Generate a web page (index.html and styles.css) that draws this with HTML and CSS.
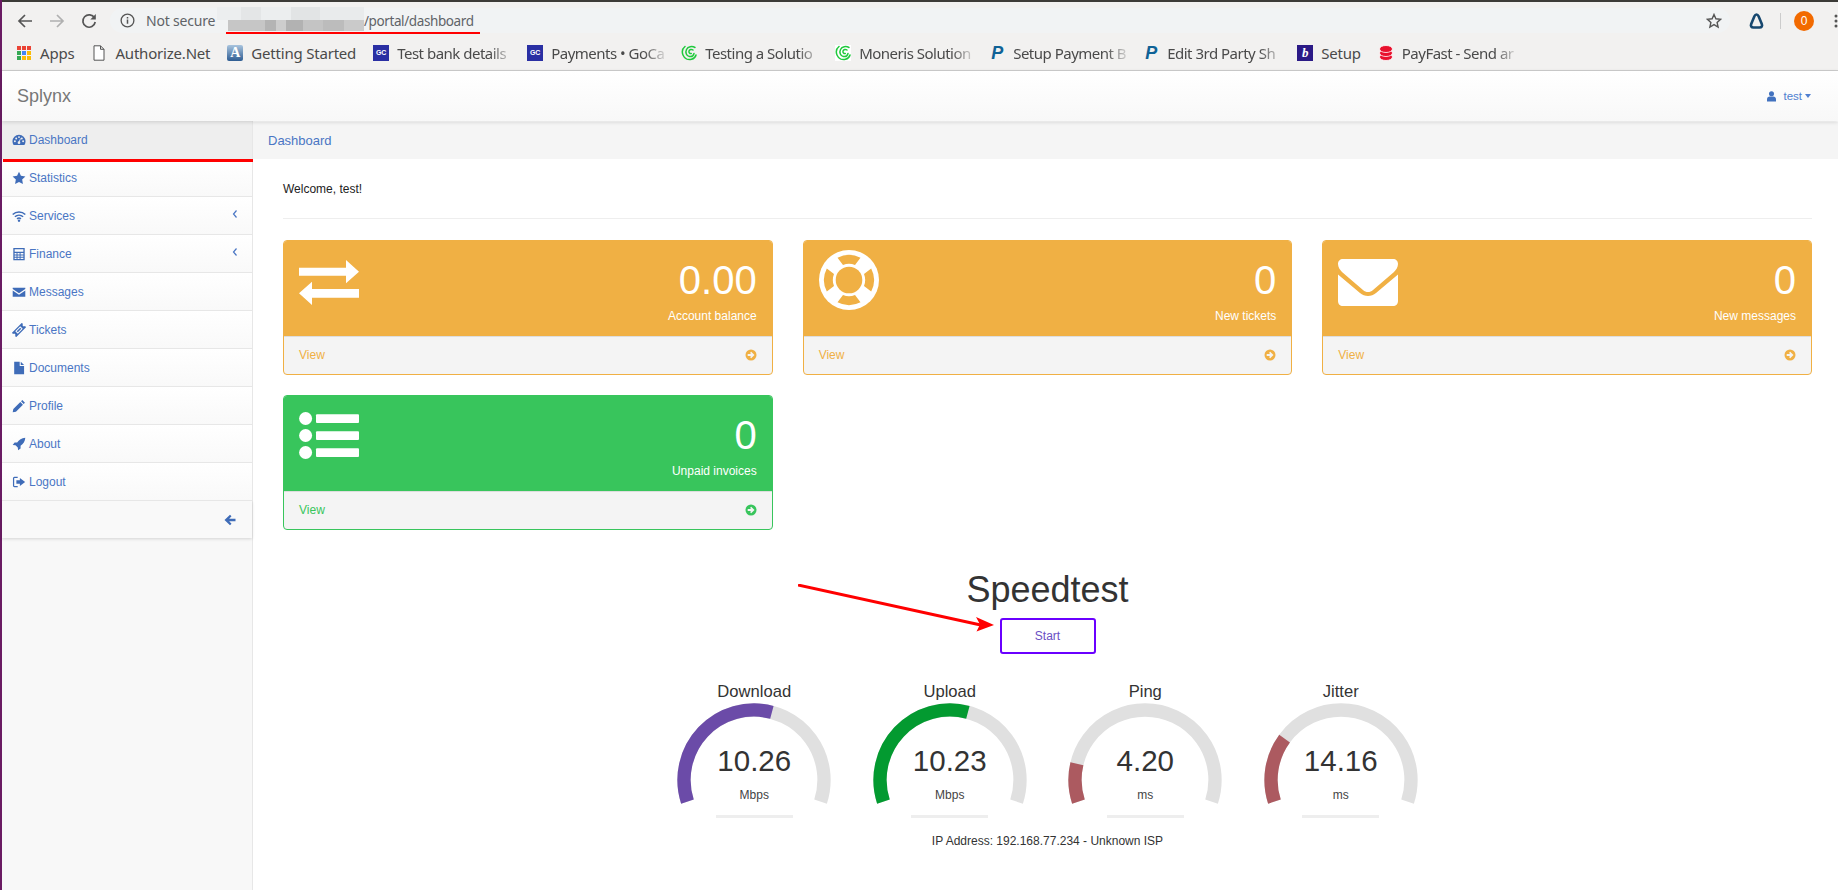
FILE: index.html
```html
<!DOCTYPE html>
<html lang="en">
<head>
  <meta charset="UTF-8" />
  <title>Splynx - Dashboard</title>
  <link rel="stylesheet" href="styles.css">
</head>
<body>
  <svg class="defs" width="0" height="0">
    <symbol id="i-swirl" viewBox="0 0 16 16">
      <g fill="none" stroke="#1fc93c" stroke-width="1.5" stroke-linecap="round">
        <path d="M4 1.5C1.5 3.5.8 7 2 10c1.400 3.500 5 5.200 8.500 4.300 2.300-.6 4-2.300 4.500-4.300"/>
        <path d="M14 2.500C11 .8 7 1.500 5.500 4.500 4 7.500 5.500 11 8.500 11.500c2.300.4 4-1 4.500-3"/>
        <path d="M12 5C10.500 3.800 8.500 4.500 8 6c-.4 1.500.8 2.800 2.300 2.500"/>
      </g>
    </symbol>
    <symbol id="i-go" viewBox="0 0 12 12">
      <circle cx="6" cy="6" r="5.500" fill="currentColor"/>
      <path d="M6.200 2.700L9.500 6 6.200 9.300 5 8.100 6.200 6.900H2.700V5.100h3.500L5 3.900z" fill="#f4f4f4"/>
    </symbol>
    <symbol id="i-chev" viewBox="0 0 6 10">
      <path d="M4.500 1.500L1.500 5l3 3.500" fill="none" stroke="currentColor" stroke-width="1.200"/>
    </symbol>
  </svg>

  <div class="window">
    <header class="chrome">
      <div class="toolbar">
        <svg class="tb-icon" viewBox="0 0 16 16"><path d="M15 8H2M8 2L2 8l6 6" fill="none" stroke="#555" stroke-width="1.700"/></svg>
        <svg class="tb-icon" viewBox="0 0 16 16"><path d="M1 8h13M8 2l6 6-6 6" fill="none" stroke="#b0b0b0" stroke-width="1.700"/></svg>
        <svg class="tb-icon" viewBox="0 0 16 16"><path d="M13.500 5A6.200 6.200 0 1 0 14.200 9" fill="none" stroke="#555" stroke-width="1.700"/><path d="M14.800 1v5.500H9.300z" fill="#555"/></svg>
        <div class="omnibox">
          <svg class="info-icon" viewBox="0 0 16 16"><circle cx="8" cy="8" r="6.800" fill="none" stroke="#555" stroke-width="1.400"/><path d="M7.200 7h1.600v4.500H7.200zM7.200 4.200h1.600v1.600H7.200z" fill="#555"/></svg>
          <span class="not-secure">Not secure</span>
          <span class="url">/portal/dashboard</span>
          <svg class="star-icon" viewBox="0 0 16 16"><path d="M8 1.500l1.900 4.300 4.600.5-3.400 3.100 1 4.600L8 11.600l-4.100 2.400 1-4.600L1.500 6.300l4.600-.5z" fill="none" stroke="#555" stroke-width="1.400"/></svg>
        </div>
        <svg class="ext-icon" viewBox="0 0 16 16"><path d="M8 1.500c1 0 1.600.7 2.100 1.800l3.200 7.700c.8 2-.1 3.500-2.300 3.500H5c-2.200 0-3.100-1.500-2.300-3.500l3.200-7.700C6.400 2.200 7 1.500 8 1.500z" fill="none" stroke="#17486f" stroke-width="2.600"/></svg>
        <span class="tb-sep"></span>
        <span class="avatar">0</span>
        <svg class="dots-icon" viewBox="0 0 4 16"><circle cx="2" cy="3" r="1.500"/><circle cx="2" cy="8" r="1.500"/><circle cx="2" cy="13" r="1.500"/></svg>
      </div>
      <nav class="bookmarks">
        <a class="bm">
          <svg class="fav" viewBox="0 0 16 16">
            <rect x="1" y="1" width="4" height="4" fill="#ea4335"/><rect x="6" y="1" width="4" height="4" fill="#ea4335"/><rect x="11" y="1" width="4" height="4" fill="#ea4335"/>
            <rect x="1" y="6" width="4" height="4" fill="#34a853"/><rect x="6" y="6" width="4" height="4" fill="#4285f4"/><rect x="11" y="6" width="4" height="4" fill="#fbbc05"/>
            <rect x="1" y="11" width="4" height="4" fill="#34a853"/><rect x="6" y="11" width="4" height="4" fill="#fbbc05"/><rect x="11" y="11" width="4" height="4" fill="#fbbc05"/>
          </svg>
          <span class="bm-text">Apps</span>
        </a>
        <a class="bm">
          <svg class="fav" viewBox="0 0 16 16"><path d="M3 .8h6.500L13 4.300V15.200H3zM9.500.8v3.500H13" fill="#fff" stroke="#555" stroke-width="1"/></svg>
          <span class="bm-text">Authorize.Net</span>
        </a>
        <a class="bm">
          <span class="fav fav-a">A</span>
          <span class="bm-text">Getting Started</span>
        </a>
        <a class="bm">
          <span class="fav fav-gc">GC</span>
          <span class="bm-text bm-fade">Test bank details</span>
        </a>
        <a class="bm">
          <span class="fav fav-gc">GC</span>
          <span class="bm-text bm-fade">Payments • GoCa</span>
        </a>
        <a class="bm">
          <svg class="fav"><use href="#i-swirl"/></svg>
          <span class="bm-text bm-fade">Testing a Solutio</span>
        </a>
        <a class="bm">
          <svg class="fav fav-white"><use href="#i-swirl"/></svg>
          <span class="bm-text bm-fade">Moneris Solution</span>
        </a>
        <a class="bm">
          <span class="fav fav-p">P</span>
          <span class="bm-text bm-fade">Setup Payment B</span>
        </a>
        <a class="bm">
          <span class="fav fav-p">P</span>
          <span class="bm-text bm-fade">Edit 3rd Party Sh</span>
        </a>
        <a class="bm">
          <span class="fav fav-b">b</span>
          <span class="bm-text">Setup</span>
        </a>
        <a class="bm">
          <svg class="fav" viewBox="0 0 16 16"><g fill="#e8112d" stroke="#fff" stroke-width=".8"><ellipse cx="8" cy="12" rx="6.500" ry="3.500"/><ellipse cx="8" cy="8" rx="6.500" ry="3.500"/><ellipse cx="8" cy="4" rx="6.500" ry="3.500"/></g></svg>
          <span class="bm-text bm-fade">PayFast - Send ar</span>
        </a>
      </nav>
    </header>

    <div class="navbar">
      <span class="brand">Splynx</span>
      <a class="user-menu">
        <svg class="user-icon" viewBox="0 0 10 12"><circle cx="5" cy="3" r="2.800"/><path d="M0 11.500V9c0-2 1.500-3 3-3h4c1.500 0 3 1 3 3v2.500z"/></svg>
        test
        <span class="caret"></span>
      </a>
    </div>

    <div class="layout">
      <aside class="sidebar">
        <ul class="side-menu">
          <li class="side-item active">
            <svg class="side-icon" viewBox="0 0 16 16"><path d="M8 2a7.500 7.500 0 0 0-7.500 7.500c0 1.600.5 3 1.300 4.200h12.400c.8-1.200 1.300-2.600 1.300-4.200A7.500 7.500 0 0 0 8 2z"/><g fill="#eee"><circle cx="3.300" cy="9.500" r="1.100"/><circle cx="4.800" cy="6.200" r="1.100"/><circle cx="8" cy="4.700" r="1.100"/><circle cx="11.200" cy="6.200" r="1.100"/><circle cx="12.700" cy="9.500" r="1.100"/><circle cx="8" cy="11" r="1.500"/><path d="M7.400 10.500L9.500 6l.6.300-1.600 4.700z"/></g></svg>
            Dashboard
          </li>
          <li class="side-item">
            <svg class="side-icon" viewBox="0 0 16 16"><path d="M8 .8l2.200 4.700 5.100.7-3.700 3.600.9 5.100L8 12.600l-4.500 2.300.9-5.100L.7 6.200l5.100-.7z"/></svg>
            Statistics
          </li>
          <li class="side-item">
            <svg class="side-icon" viewBox="0 0 16 16"><g fill="none" stroke="currentColor" stroke-width="1.800"><path d="M.8 6.300a10.500 10.500 0 0 1 14.400 0"/><path d="M3.300 8.900a7 7 0 0 1 9.400 0"/><path d="M5.800 11.300a3.300 3.300 0 0 1 4.400 0"/></g><circle cx="8" cy="13.300" r="1.400"/></svg>
            Services
            <svg class="side-chev"><use href="#i-chev"/></svg>
          </li>
          <li class="side-item">
            <svg class="side-icon" viewBox="0 0 16 16"><path fill-rule="evenodd" d="M1.500 1h13v14h-13zM3 2.500v2.800h10V2.500zM3 6.800v1.700h2.200V6.800zm3.300 0v1.700h2.400V6.800zm3.500 0v1.700H13V6.800zM3 9.600v1.600h2.200V9.600zm3.300 0v1.600h2.400V9.600zm3.500 0v1.600H13V9.600zM3 12.200v1.500h2.200v-1.500zm3.300 0v1.500h2.400v-1.500zm3.500 0v1.500H13v-1.500z"/></svg>
            Finance
            <svg class="side-chev"><use href="#i-chev"/></svg>
          </li>
          <li class="side-item">
            <svg class="side-icon" viewBox="0 0 16 16"><path d="M.8 3h14.400v1.500L8 9.300.8 4.500zM.8 6.300L8 11l7.200-4.700V13.500H.8z"/></svg>
            Messages
          </li>
          <li class="side-item">
            <svg class="side-icon" viewBox="0 0 16 16"><g transform="rotate(-45 8 8)"><path fill-rule="evenodd" d="M0 4.500h16v2a1.500 1.500 0 0 0 0 3v2H0v-2a1.500 1.500 0 0 0 0-3zM4 6v4h8V6z"/><rect x="5.200" y="7.100" width="5.600" height="1.800"/></g></svg>
            Tickets
          </li>
          <li class="side-item">
            <svg class="side-icon" viewBox="0 0 16 16"><path d="M2.500.8h6.300v5h5v9.400H2.500zM10 .8l3.800 3.800H10z"/></svg>
            Documents
          </li>
          <li class="side-item">
            <svg class="side-icon" viewBox="0 0 16 16"><path d="M11.800 1.200l3 3-1.500 1.500-3-3zM9.500 3.500l3 3-8 8-3.700.7.700-3.700z"/></svg>
            Profile
          </li>
          <li class="side-item">
            <svg class="side-icon" viewBox="0 0 16 16"><path d="M15.200.8c-4.300.2-7.200 2.400-9.300 5.400H3L.8 9l3.200.4 2.600 2.600.4 3.200 2.800-2.200v-2.900c3-2.100 5.200-5 5.400-9.300z"/></svg>
            About
          </li>
          <li class="side-item">
            <svg class="side-icon" viewBox="0 0 16 16"><path d="M6.500 2.800H2.800a1 1 0 0 0-1 1v8.400a1 1 0 0 0 1 1h3.700" fill="none" stroke="currentColor" stroke-width="1.400"/><path d="M9 3.500L15 8l-6 4.500V10H5V6h4z"/></svg>
            Logout
          </li>
        </ul>
        <div class="side-collapse">
          <svg class="collapse-icon" viewBox="0 0 12 12"><path d="M6 .8l1.500 1.500-2.300 2.400h6.300v2.600H5.200l2.300 2.400L6 11.200.5 6z"/></svg>
        </div>
      </aside>

      <main class="main">
        <div class="breadcrumb">Dashboard</div>
        <div class="content">
          <p class="welcome">Welcome, test!</p>
          <hr class="rule">

          <div class="cards">
            <div class="card card-orange">
              <div class="card-head">
                <svg class="card-icon" viewBox="0 0 60 47"><path d="M0 7.700h47V0l13 11.700-13 11.600v-7.600H0zM60 29H13v-7.300L0 33.300 13 45v-7.300h47z"/></svg>
                <div class="card-nums">
                  <div class="card-value">0.00</div>
                  <div class="card-label">Account balance</div>
                </div>
              </div>
              <a class="card-foot">View <svg class="go-icon"><use href="#i-go"/></svg></a>
            </div>
            <div class="card card-orange">
              <div class="card-head">
                <svg class="card-icon icon-ring" viewBox="-30 -20 60 47">
                  <circle r="30"/>
                  <circle r="13.300" fill="#f0b044"/>
                  <g fill="#f0b044">
                    <path id="ring-seg" d="M-11.500-22.200A25 25 0 0 1 11.500-22.200L6-15A16.200 16.200 0 0 0-6-15z"/>
                    <use href="#ring-seg" transform="rotate(90)"/>
                    <use href="#ring-seg" transform="rotate(180)"/>
                    <use href="#ring-seg" transform="rotate(270)"/>
                  </g>
                </svg>
                <div class="card-nums">
                  <div class="card-value">0</div>
                  <div class="card-label">New tickets</div>
                </div>
              </div>
              <a class="card-foot">View <svg class="go-icon"><use href="#i-go"/></svg></a>
            </div>
            <div class="card card-orange">
              <div class="card-head">
                <svg class="card-icon icon-mail" viewBox="0 0 60 47"><path d="M5 0h50c3 0 5 2 5 5 0 3-2 6-4 8L35 31c-3 2.700-7 2.700-10 0L4 13C2 11 0 8 0 5c0-3 2-5 5-5z"/><path d="M0 15.500L22 34c4.500 4 11.500 4 16 0l22-18.500V42c0 3-2 5-5 5H5c-3 0-5-2-5-5z"/></svg>
                <div class="card-nums">
                  <div class="card-value">0</div>
                  <div class="card-label">New messages</div>
                </div>
              </div>
              <a class="card-foot">View <svg class="go-icon"><use href="#i-go"/></svg></a>
            </div>
            <div class="card card-green">
              <div class="card-head">
                <svg class="card-icon icon-list" viewBox="0 0 60 47"><circle cx="6.600" cy="6.500" r="6.500"/><circle cx="6.600" cy="23.500" r="6.500"/><circle cx="6.600" cy="40.500" r="6.500"/><rect x="17" y="2.200" width="43" height="8.700" rx="1"/><rect x="17" y="19.200" width="43" height="8.700" rx="1"/><rect x="17" y="36.200" width="43" height="8.700" rx="1"/></svg>
                <div class="card-nums">
                  <div class="card-value">0</div>
                  <div class="card-label">Unpaid invoices</div>
                </div>
              </div>
              <a class="card-foot">View <svg class="go-icon"><use href="#i-go"/></svg></a>
            </div>
          </div>

          <section class="speedtest">
            <h1 class="st-title">Speedtest</h1>
            <button class="st-start">Start</button>
            <div class="gauges">
              <div class="gauge">
                <div class="gauge-name">Download</div>
                <svg class="gauge-arc" viewBox="0 0 156 110">
                  <path class="arc-track" d="M11.430 99.630A70 70 0 1 1 144.570 99.630"/>
                  <path class="arc-dl" d="M11.430 99.630A70 70 0 0 1 95.880 10.320"/>
                </svg>
                <div class="gauge-value">10.26</div>
                <div class="gauge-unit">Mbps</div>
                <div class="gauge-progress"></div>
              </div>
              <div class="gauge">
                <div class="gauge-name">Upload</div>
                <svg class="gauge-arc" viewBox="0 0 156 110">
                  <path class="arc-track" d="M11.430 99.630A70 70 0 1 1 144.570 99.630"/>
                  <path class="arc-ul" d="M11.430 99.630A70 70 0 0 1 95.880 10.320"/>
                </svg>
                <div class="gauge-value">10.23</div>
                <div class="gauge-unit">Mbps</div>
                <div class="gauge-progress"></div>
              </div>
              <div class="gauge">
                <div class="gauge-name">Ping</div>
                <svg class="gauge-arc" viewBox="0 0 156 110">
                  <path class="arc-track" d="M11.430 99.630A70 70 0 1 1 144.570 99.630"/>
                  <path class="arc-ping" d="M11.430 99.630A70 70 0 0 1 9.900 61.800"/>
                </svg>
                <div class="gauge-value">4.20</div>
                <div class="gauge-unit">ms</div>
                <div class="gauge-progress"></div>
              </div>
              <div class="gauge">
                <div class="gauge-name">Jitter</div>
                <svg class="gauge-arc" viewBox="0 0 156 110">
                  <path class="arc-track" d="M11.430 99.630A70 70 0 1 1 144.570 99.630"/>
                  <path class="arc-ping" d="M11.430 99.630A70 70 0 0 1 21.600 36.600"/>
                </svg>
                <div class="gauge-value">14.16</div>
                <div class="gauge-unit">ms</div>
                <div class="gauge-progress"></div>
              </div>
            </div>
            <div class="st-ip">IP Address: 192.168.77.234 - Unknown ISP</div>
          </section>
        </div>
      </main>
    </div>
  </div>

  <!-- annotations drawn on top of the screenshot -->
  <div class="blur-top"></div>
  <div class="blur-bottom"></div>
  <div class="mark-url"></div>
  <div class="mark-dash"></div>
  <svg class="mark-arrow" viewBox="0 0 200 50">
    <path d="M0 1L185 41.500" stroke="#f00" stroke-width="3"/>
    <path d="M196 41L178 33l4 7.500-3.500 7z" fill="#f00"/>
  </svg>
</body>
</html>
```

FILE: styles.css
```css
* {
  box-sizing: border-box;
}

html, body {
  margin: 0;
  height: 890px;
  overflow: hidden;
}

body {
  position: relative;
  font-family: "Liberation Sans", Arial, sans-serif;
  font-size: 12px;
  color: #333;
  background: #fff;
}

.defs {
  display: block;
  height: 0;
}

.window {
  height: 890px;
  border-left: 2px solid #6a1b63;
  display: flex;
  flex-direction: column;
}

/* browser chrome */
.chrome {
  height: 71px;
  background: #f2f1f0;
  border-top: 2px solid #3c3b37;
  border-bottom: 1px solid #cfcfcf;
}

.toolbar {
  height: 33px;
  display: flex;
  align-items: center;
  padding: 4px 0 0 15px;
}

.tb-icon {
  width: 16px;
  height: 16px;
  margin-right: 16px;
  flex: none;
}

.omnibox {
  width: 1620px;
  margin-left: -3px;
  height: 25px;
  background: #f1f3f4;
  border-radius: 13px;
  display: flex;
  align-items: center;
  padding-left: 10px;
  font-family: "Noto Sans", sans-serif;
  font-size: 14px;
  color: #5f6368;
}

.info-icon {
  width: 15px;
  height: 15px;
  margin-right: 11px;
}

.not-secure {
  width: 218px;
  letter-spacing: -0.2px;
}

.url {
  flex: 1;
  font-size: 13.500px;
  letter-spacing: -0.4px;
}

.star-icon {
  width: 16px;
  height: 16px;
  margin-right: 8px;
}

.ext-icon {
  width: 17px;
  height: 16px;
  margin-left: 18px;
  flex: none;
}

.tb-sep {
  width: 1px;
  height: 16px;
  background: #ccc;
  margin-left: 15px;
}

.avatar {
  width: 20px;
  height: 20px;
  border-radius: 50%;
  background: #f26a00;
  color: #fff;
  font-size: 12px;
  line-height: 20px;
  text-align: center;
  margin-left: 13px;
  flex: none;
}

.dots-icon {
  width: 4px;
  height: 16px;
  fill: #555;
  margin-left: 20px;
  flex: none;
}

.bookmarks {
  height: 35px;
  display: flex;
  align-items: center;
  padding-left: 14px;
  font-family: "Noto Sans", sans-serif;
  font-size: 15px;
  color: #4a4a4a;
}

.bm {
  display: flex;
  align-items: center;
  margin-right: 17px;
}

.fav {
  width: 16px;
  height: 16px;
  margin-right: 8px;
  flex: none;
  display: block;
}

.fav-white {
  background: #fff;
}

.fav-a {
  background: linear-gradient(#a9c4de, #2e5c92);
  color: #fff;
  font-family: "Liberation Serif", serif;
  font-size: 14px;
  font-weight: bold;
  line-height: 16px;
  text-align: center;
  border-radius: 2px;
}

.fav-gc {
  background: #2a2fa3;
  color: #fff;
  font-family: "Liberation Sans", sans-serif;
  font-size: 7px;
  font-weight: bold;
  line-height: 16px;
  text-align: center;
}

.fav-p {
  color: #0f6296;
  font-family: "Liberation Sans", sans-serif;
  font-size: 18px;
  font-weight: bold;
  font-style: italic;
  line-height: 16px;
  text-align: center;
}

.fav-b {
  background: #2b1a86;
  color: #fff;
  font-family: "Liberation Serif", serif;
  font-size: 13px;
  font-weight: bold;
  font-style: italic;
  line-height: 16px;
  text-align: center;
}

.bm-text {
  white-space: nowrap;
  letter-spacing: -0.2px;
}

.bm-fade {
  width: 113px;
  letter-spacing: -0.5px;
  -webkit-mask-image: linear-gradient(to right, #000 82%, rgba(0, 0, 0, 0.2));
  mask-image: linear-gradient(to right, #000 82%, rgba(0, 0, 0, 0.2));
}

/* app navbar */
.navbar {
  position: relative;
  z-index: 2;
  height: 50px;
  flex: none;
  display: flex;
  align-items: center;
  justify-content: space-between;
  padding: 0 27px 0 15px;
  background: linear-gradient(#fff, #f8f8f8);
  box-shadow: 0 1px 4px rgba(0, 0, 0, 0.15);
}

.brand {
  font-size: 18px;
  color: #777;
}

.user-menu {
  display: flex;
  align-items: center;
  font-size: 11.500px;
  color: #4f7fd0;
}

.user-icon {
  width: 9px;
  height: 11px;
  fill: #4272bf;
  margin-right: 7px;
}

.caret {
  width: 0;
  height: 0;
  border-left: 3.500px solid transparent;
  border-right: 3.500px solid transparent;
  border-top: 4px solid #4f7fd0;
  margin-left: 3px;
}

.layout {
  flex: 1;
  display: flex;
  padding-top: 1px;
  min-height: 0;
}

/* sidebar */
.sidebar {
  width: 251px;
  flex: none;
  margin-top: -1px;
  background: #f8f8f8;
  border-right: 1px solid #e7e7e7;
}

.side-menu {
  list-style: none;
  margin: 0;
  padding: 0;
}

.side-item {
  height: 38px;
  display: flex;
  align-items: center;
  padding-left: 10px;
  border-bottom: 1px solid #e7e7e7;
  background: linear-gradient(#fff, #f9f9f9);
  color: #4a76c4;
  font-size: 12px;
  position: relative;
}

.side-item.active {
  background: #eee;
  border-bottom: 0;
}

.side-icon {
  width: 14px;
  height: 14px;
  margin-right: 3px;
  fill: #3f6cb8;
  color: #3f6cb8;
  flex: none;
}

.side-chev {
  width: 6px;
  height: 10px;
  color: #4a76c4;
  margin-left: auto;
  margin-right: 14px;
  margin-top: -3px;
}

.side-collapse {
  height: 37px;
  display: flex;
  align-items: center;
  justify-content: flex-end;
  padding-right: 16px;
  background: #f9f9f9;
  box-shadow: 0 1px 3px rgba(0, 0, 0, 0.15);
}

.collapse-icon {
  width: 12px;
  height: 12px;
  fill: #3f6cb8;
}

/* main */
.main {
  flex: 1;
  min-width: 0;
}

.breadcrumb {
  height: 37px;
  line-height: 37px;
  padding-left: 15px;
  background: #f5f5f5;
  color: #4a76c4;
  font-size: 13px;
}

.content {
  padding: 22px 26px 0 30px;
}

.welcome {
  margin: 0;
  line-height: 17px;
  font-size: 12px;
  color: #222;
}

.rule {
  border: 0;
  border-top: 1px solid #eee;
  margin: 20px 0 21px;
}

.cards {
  display: grid;
  grid-template-columns: repeat(3, 1fr);
  gap: 20px 30px;
}

.card {
  height: 135px;
  border: 1px solid;
  border-radius: 4px;
  overflow: hidden;
  background: #f4f4f4;
}

.card-orange {
  border-color: #f0b044;
  color: #f0b044;
}

.card-green {
  border-color: #38c55c;
  color: #38c55c;
}

.card-head {
  height: 95px;
  display: flex;
  justify-content: space-between;
  padding: 19px 15px 0;
  background: currentColor;
  border-bottom: 0;
}

.card-icon {
  width: 60px;
  height: 47px;
  fill: #fff;
}

.icon-ring {
  overflow: visible;
}

.icon-mail {
  margin-top: -1px;
}

.icon-list {
  margin-top: -3px;
}

.card-nums {
  text-align: right;
  color: #fff;
}

.card-value {
  font-size: 40px;
  line-height: 40px;
}

.card-label {
  font-size: 12px;
  line-height: 14px;
  margin-top: 9px;
}

.card-foot {
  height: 37px;
  display: flex;
  align-items: center;
  justify-content: space-between;
  padding: 0 15px;
  border-top: 1px solid #ddd;
  font-size: 12px;
}

.go-icon {
  width: 12px;
  height: 12px;
  color: inherit;
}

/* speedtest */
.speedtest {
  text-align: center;
}

.st-title {
  margin: 40px 0 0;
  font-size: 36px;
  line-height: 40px;
  font-weight: normal;
  color: #333;
}

.st-start {
  display: block;
  width: 96px;
  height: 36px;
  margin: 8px auto 0;
  background: #fff;
  border: 2px solid #6a00ff;
  border-radius: 3px;
  color: #6a4fc4;
  font-family: inherit;
  font-size: 12px;
}

.gauges {
  display: flex;
  justify-content: center;
  margin-top: 27px;
}

.gauge {
  position: relative;
  width: 195.500px;
}

.gauge-name {
  font-size: 16.600px;
  line-height: 21px;
  color: #333;
}

.gauge-arc {
  display: block;
  width: 156px;
  height: 110px;
  margin: 0 auto;
  fill: none;
  stroke-width: 13.300;
}

.arc-track {
  stroke: #e0e0e0;
}

.arc-dl {
  stroke: #6b4ba8;
}

.arc-ul {
  stroke: #039a30;
}

.arc-ping {
  stroke: #ac5a60;
}

.gauge-value {
  position: absolute;
  top: 63px;
  left: 0;
  right: 0;
  font-size: 29.500px;
  line-height: 34px;
  color: #333;
}

.gauge-unit {
  position: absolute;
  top: 107px;
  left: 0;
  right: 0;
  font-size: 12px;
  line-height: 14px;
  color: #444;
}

.gauge-progress {
  width: 77px;
  height: 3px;
  margin: 3px auto 0;
  background: #eee;
}

.st-ip {
  margin-top: 16px;
  font-size: 12px;
  line-height: 14px;
  color: #333;
}

/* annotations */
.blur-top {
  position: absolute;
  left: 217px;
  top: 7px;
  width: 147px;
  height: 13px;
  background: linear-gradient(to right, #eceeef 0 16%, #e4e6e7 16% 30%, #eceeef 30% 50%, #e2e4e5 50% 70%, #e9ebec 70% 100%);
}

.blur-bottom {
  position: absolute;
  left: 228px;
  top: 20px;
  width: 136px;
  height: 11px;
  background: linear-gradient(to right, #c6c6c6 0 27%, #b4b4b4 27% 35%, #cdcdcd 35% 43%, #b2b2b2 43% 55%, #c4c4c4 55% 70%, #bcbcbc 70% 85%, #cacaca 85% 100%);
}

.mark-url {
  position: absolute;
  left: 226px;
  top: 32px;
  width: 254px;
  height: 2px;
  background: #f00;
}

.mark-dash {
  position: absolute;
  left: 3px;
  top: 159px;
  width: 250px;
  height: 3px;
  background: #f00;
}

.mark-arrow {
  position: absolute;
  left: 798px;
  top: 584px;
  width: 200px;
  height: 50px;
}
```
